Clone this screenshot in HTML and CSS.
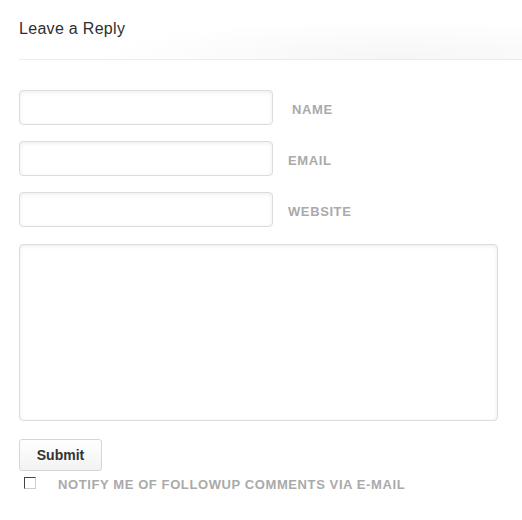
FILE: index.html
```html
<!DOCTYPE html>
<html lang="en">
<head>
    <meta charset="UTF-8">
    <title>Leave a Reply</title>
    <link rel="stylesheet" href="styles.css">
</head>
<body>
    <div class="respond">
        <h3 class="reply-title">Leave a Reply</h3>

        <form class="comment-form">
            <p class="field">
                <input type="text" id="author">
                <label for="author" class="name-label">Name</label>
            </p>
            <p class="field">
                <input type="text" id="email">
                <label for="email">Email</label>
            </p>
            <p class="field">
                <input type="text" id="url">
                <label for="url">Website</label>
            </p>
            <p class="message">
                <textarea id="comment"></textarea>
            </p>
            <p class="submit-row">
                <button type="button" class="submit-btn">Submit</button>
            </p>
            <p class="notify">
                <span class="checkbox"></span>
                <label>Notify me of followup comments via e-mail</label>
            </p>
        </form>
    </div>
</body>
</html>
```

FILE: styles.css
```css
* {
    margin: 0;
    padding: 0;
    box-sizing: border-box;
}

body {
    font-family: 'Liberation Sans', Arial, sans-serif;
    background-color: #fff;
    color: #333;
}

.respond {
    padding: 19px 0 0 19px;
}

.reply-title {
    font-size: 16px;
    font-weight: normal;
    letter-spacing: 0.3px;
    color: #2e2e2e;
    line-height: 20px;
    height: 41px;
    border-bottom: 1px solid #ececec;
    background: radial-gradient(ellipse 60% 100% at 75% 100%, #f6f6f6, rgba(255, 255, 255, 0));
}

.comment-form {
    padding-top: 30px;
}

.field {
    display: flex;
    align-items: center;
    margin-bottom: 16px;
}

.field input,
.message textarea {
    width: 254px;
    height: 35px;
    border: 1px solid #dcdcdc;
    border-radius: 4px;
    background-color: #fff;
    box-shadow: inset 0 1px 4px rgba(0, 0, 0, 0.08);
    outline: none;
}

.field label,
.notify label {
    font-size: 13px;
    font-weight: bold;
    letter-spacing: 0.6px;
    text-transform: uppercase;
    color: #aaa;
    margin-left: 15px;
    padding-top: 3px;
}

.field .name-label {
    margin-left: 19px;
}

.message {
    padding-top: 1px;
}

.message textarea {
    display: block;
    width: 479px;
    height: 177px;
    resize: none;
}

.submit-row {
    padding-top: 18px;
}

.submit-btn {
    display: block;
    width: 83px;
    height: 32px;
    font-family: 'Liberation Sans', Arial, sans-serif;
    font-size: 14px;
    font-weight: bold;
    color: #333;
    border: 1px solid #d6d6d6;
    border-radius: 3px;
    background: linear-gradient(#fff, #f2f2f2);
    cursor: pointer;
}

.notify {
    display: flex;
    align-items: center;
    padding: 3px 0 0 5px;
}

.checkbox {
    width: 12px;
    height: 12px;
    border: 1px solid #444;
    border-right-color: #ccc;
    border-bottom-color: #ccc;
    background-color: #fff;
}

.notify label {
    margin-left: 22px;
    padding-top: 3px;
}
```
